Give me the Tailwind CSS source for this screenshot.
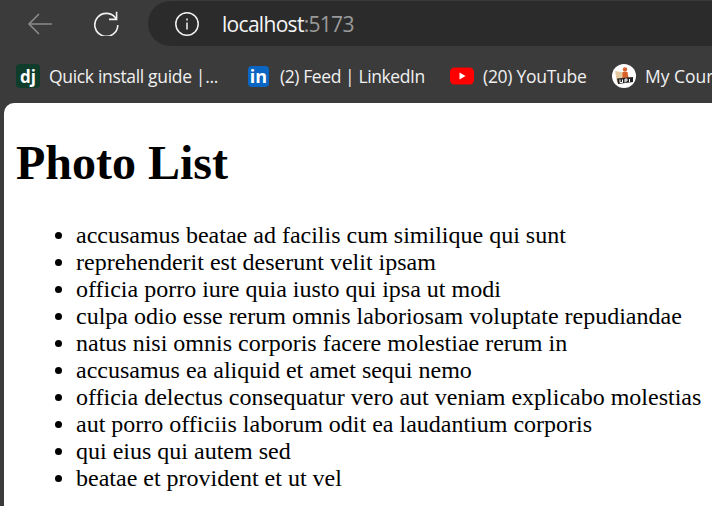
<!DOCTYPE html>
<html lang="en">
<head>
  <meta charset="UTF-8" />
  <meta name="viewport" content="width=device-width, initial-scale=1.0"/>
  <title>Photo List</title>
  <script src="https://cdn.jsdelivr.net/npm/@tailwindcss/browser@4"></script>
</head>
<body class="bg-[#3b3b3b] h-[506px] w-[712px] overflow-hidden flex flex-col">

  <!-- Address bar -->
  <div class="h-[46px] shrink-0 flex items-start">
    <div class="w-[148px] h-[46px] shrink-0 flex items-center pl-[27px] gap-[41px]">
      <svg width="26" height="24" viewBox="0 0 26 24" fill="none" stroke="#8a8a8a" stroke-width="1.6" class="mt-0.5">
        <path d="M25 12H2M12 2L2 12l10 10"/>
      </svg>
      <svg width="26" height="26" viewBox="0 0 26 26" fill="none" stroke="#f2f2f2" stroke-width="1.6">
        <path d="M22.2 9A11.5 11.5 0 1 0 23.8 15"/>
        <path d="M22.6 1.8V9.4H15"/>
      </svg>
    </div>
    <div class="flex-1 h-[45px] mt-px bg-[#2b2b2b] rounded-l-[23px] flex items-center pl-[27px]">
      <svg width="24" height="24" viewBox="0 0 24 24" fill="none" stroke="#f2f2f2" stroke-width="1.5">
        <circle cx="12" cy="12" r="11.2"/>
        <path d="M12 10.5v7M12 6.5v2"/>
      </svg>
      <span class="ml-[23px] pt-0.5 text-[21px] text-[#f5f5f5] font-['Open_Sans','Noto_Sans',sans-serif] tracking-[-0.7px]">localhost<span class="text-[#9a9a9a]">:5173</span></span>
    </div>
  </div>

  <!-- Bookmarks bar -->
  <div class="h-[57px] shrink-0 flex items-center pl-4 pt-[3px] text-[17.5px] text-[#f0f0f0] font-['Open_Sans','Noto_Sans',sans-serif] whitespace-nowrap">
    <div class="flex items-center w-[232px] shrink-0">
      <span class="w-6 h-6 rounded-sm bg-[#103c2c] text-white text-[17px] font-bold flex items-center justify-center leading-none">dj</span>
      <span class="ml-[9px] tracking-[-0.33px]">Quick install guide |...</span>
    </div>
    <div class="flex items-center w-[202px] shrink-0">
      <span class="w-[21px] h-[21px] rounded-sm bg-[#0a66c2] text-white text-[18px] font-bold flex items-center justify-center leading-none">in</span>
      <span class="ml-[11px] tracking-[-0.41px]">(2) Feed | LinkedIn</span>
    </div>
    <div class="flex items-center w-[162px] shrink-0">
      <svg width="24" height="18" viewBox="0 0 24 18">
        <rect width="24" height="17" y="0.5" rx="4.5" fill="#f00"/>
        <path d="M9.5 5.5l6 3.5-6 3.5z" fill="#fff"/>
      </svg>
      <span class="ml-[9px] tracking-[-0.28px]">(20) YouTube</span>
    </div>
    <div class="flex items-center shrink-0">
      <svg width="24" height="24" viewBox="0 0 24 24" class="shrink-0">
        <circle cx="12" cy="12" r="12" fill="#fff"/>
        <path d="M3 7l9 1.5 6 6-13 4z" fill="#e3c9a0"/>
        <circle cx="13" cy="5.5" r="2.2" fill="#d8622a"/>
        <path d="M10.5 8h5l1 6h-6z" fill="#d8622a"/>
        <path d="M5 14.5l16-1.5v5l-15 2z" fill="#222"/>
        <path d="M8 15.5v3h2.5v-3M13 15v3.5M13 15h2v2h-2M17.5 15v3" fill="none" stroke="#fff" stroke-width="1"/>
      </svg>
      <span class="ml-[9px]">My Courses</span>
    </div>
  </div>

  <!-- Page content -->
  <main class="flex-1 ml-1 bg-white rounded-tl-[10px] px-3 text-black font-['Liberation_Serif',serif] overflow-hidden">
    <h1 class="text-[48px] font-bold leading-[55px] mt-8 mb-8">Photo List</h1>
    <ul class="list-disc pl-[60px] text-[24px] leading-[27px] whitespace-nowrap">
      <li>accusamus beatae ad facilis cum similique qui sunt</li>
      <li>reprehenderit est deserunt velit ipsam</li>
      <li>officia porro iure quia iusto qui ipsa ut modi</li>
      <li>culpa odio esse rerum omnis laboriosam voluptate repudiandae</li>
      <li>natus nisi omnis corporis facere molestiae rerum in</li>
      <li>accusamus ea aliquid et amet sequi nemo</li>
      <li>officia delectus consequatur vero aut veniam explicabo molestias</li>
      <li>aut porro officiis laborum odit ea laudantium corporis</li>
      <li>qui eius qui autem sed</li>
      <li>beatae et provident et ut vel</li>
    </ul>
  </main>
</body>
</html>
